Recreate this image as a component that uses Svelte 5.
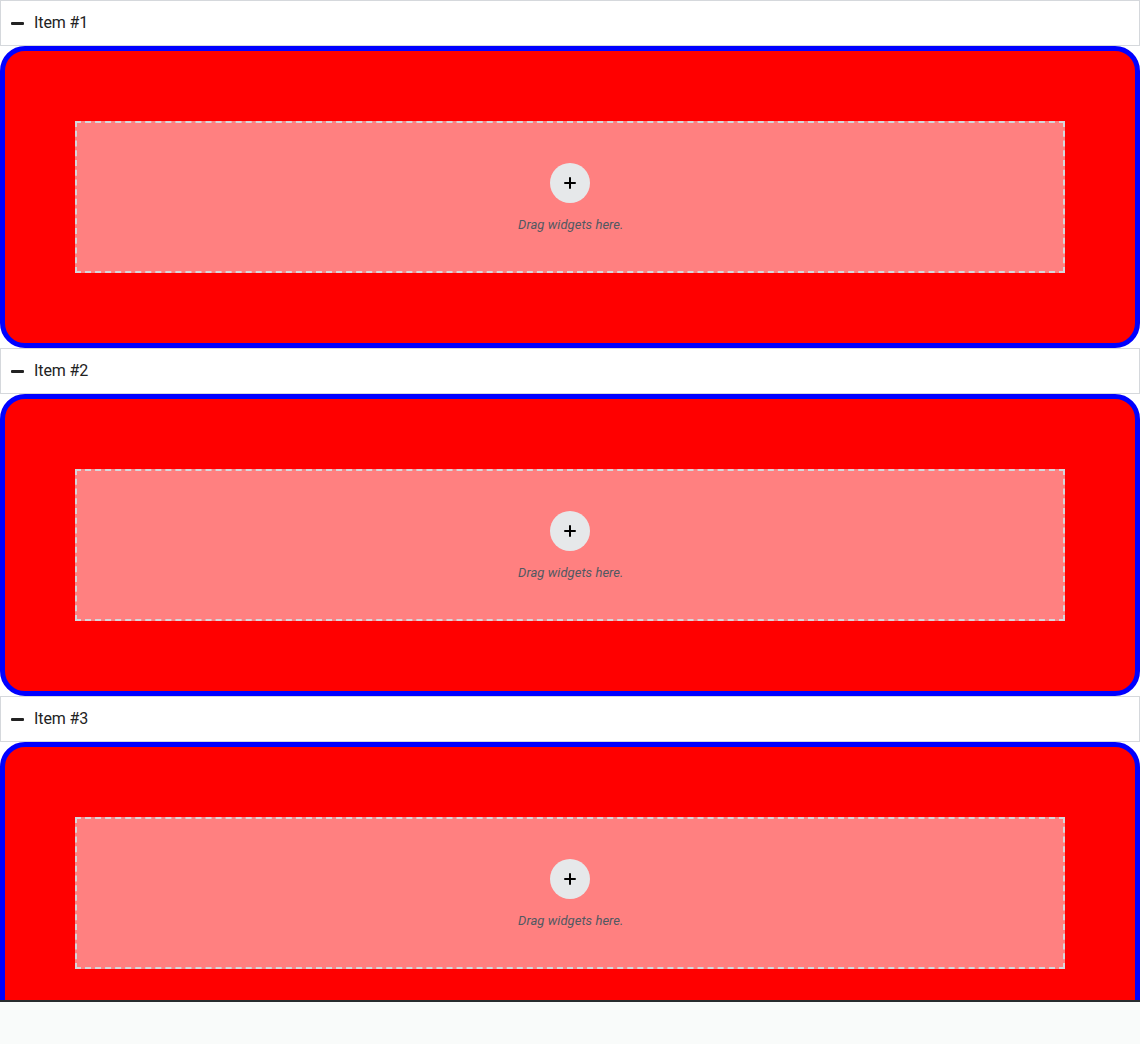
<script>
  const items = ['Item #1', 'Item #2', 'Item #3'];
</script>

<div class="editor">
  <div class="viewport">
    {#each items as title}
      <section>
        <header>
          <svg class="minus" width="13" height="3" viewBox="0 0 13 3" fill="currentColor"><rect width="13" height="3" rx="1" /></svg>
          <span>{title}</span>
        </header>
        <div class="panel">
          <div class="drop">
            <button aria-label="Add">
              <svg width="12" height="12" viewBox="0 0 12 12" fill="none" stroke="#000" stroke-width="2" stroke-linecap="round"><path d="M6 1v10M1 6h10" /></svg>
            </button>
            <p>Drag widgets here.</p>
          </div>
        </div>
      </section>
    {/each}
  </div>
  <footer></footer>
</div>

<style>
  :global(body) { margin: 0; overflow: hidden; }
  .editor { height: 1044px; background: #f9fbfa; font-family: Roboto, sans-serif; overflow: hidden; }
  .viewport { height: 1000px; overflow: hidden; background: #fff; }
  header { box-sizing: border-box; height: 46px; border: 1px solid #d5d8dc; display: flex; align-items: center; gap: 10px; padding: 0 10px; color: #222; font-size: 16px; line-height: 16px; letter-spacing: -0.1px; }
  .minus { margin-top: 1px; }
  .panel { box-sizing: border-box; height: 302px; padding: 70px; border: 5px solid #00f; border-radius: 25px; background: #f00; }
  .drop { box-sizing: border-box; height: 152px; border: 2px dashed #d5d8dc; background: rgba(255, 255, 255, 0.5); display: flex; flex-direction: column; align-items: center; padding-top: 40px; }
  button { width: 40px; height: 40px; padding: 0; border: 0; border-radius: 50%; background: #e6e8ea; display: flex; align-items: center; justify-content: center; }
  p { margin: 15px 0 0 1.5px; color: #515962; font-size: 13px; line-height: 13px; font-style: italic; letter-spacing: 0.05px; }
  footer { height: 44px; box-sizing: border-box; border-top: 2px solid #282c2e; }
</style>
